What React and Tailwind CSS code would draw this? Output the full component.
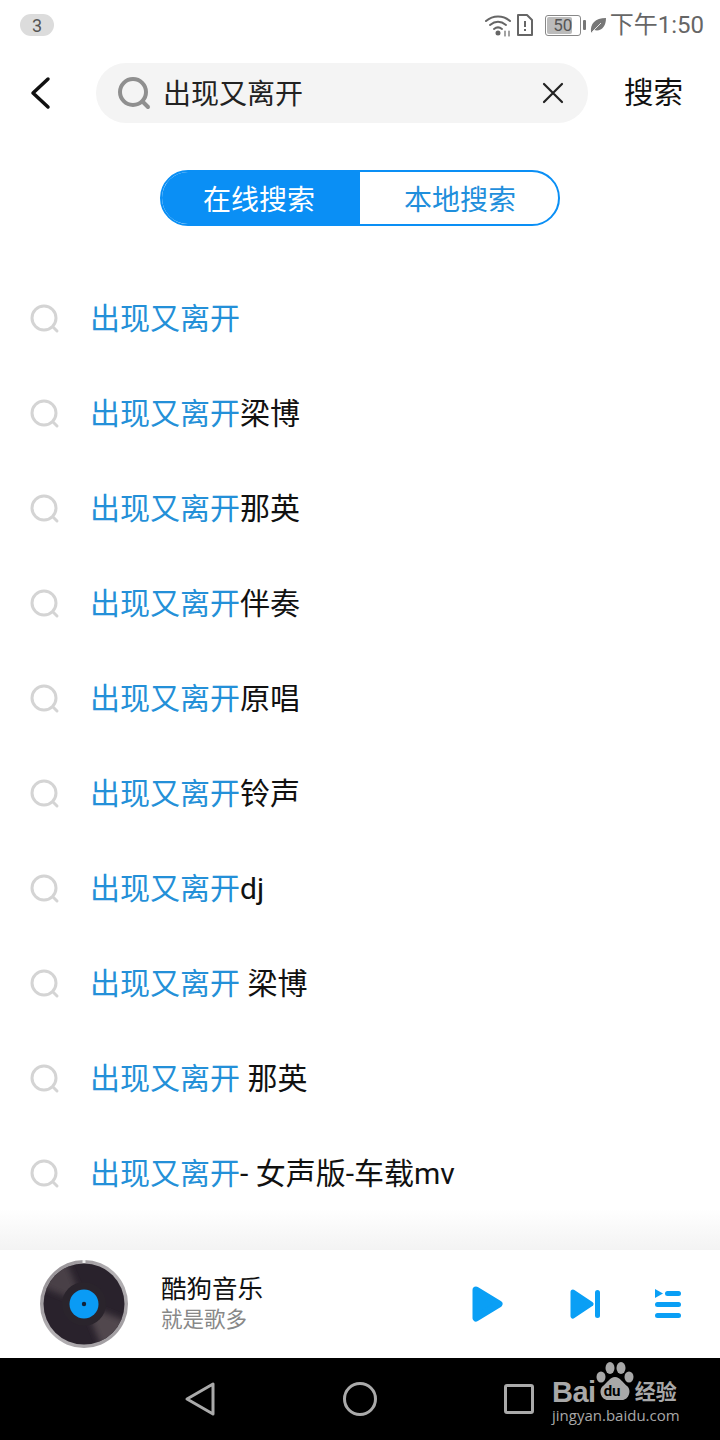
import React from 'react';

const FONT = '"Roboto", "Noto Sans CJK SC", sans-serif';

const rows = [
  ['出现又离开', ''],
  ['出现又离开', '梁博'],
  ['出现又离开', '那英'],
  ['出现又离开', '伴奏'],
  ['出现又离开', '原唱'],
  ['出现又离开', '铃声'],
  ['出现又离开', 'dj'],
  ['出现又离开', ' 梁博'],
  ['出现又离开', ' 那英'],
  ['出现又离开', '- 女声版-车载mv'],
];

function StatusBar() {
  return (
    <div className="h-[50px] flex items-center justify-between pl-5 pr-4 shrink-0">
      <div className="w-[34px] h-[22px] rounded-full bg-[#dcdcdc] flex items-center justify-center text-[18px] text-[#555]">3</div>
      <div className="flex items-center text-[#666]">
        <svg width="28" height="24" viewBox="0 0 28 24" fill="none" stroke="#666" strokeWidth="2" strokeLinecap="round">
          <path d="M2 8c7-6 17-6 24 0" />
          <path d="M6 12c5-4 11-4 16 0" />
          <path d="M10 16c2.500-2 5.500-2 8 0" />
          <circle cx="14" cy="20" r="1.500" fill="#666" />
          <path d="M21 18v5M25 18v5" strokeWidth="1.200" />
        </svg>
        <svg className="ml-[4px]" width="18" height="24" viewBox="0 0 18 24" fill="none" stroke="#666" strokeWidth="2" strokeLinejoin="round">
          <path d="M2 2h9l5 5v15H2z" />
          <path d="M9 8v6M9 16v2" />
        </svg>
        <div className="ml-[11px] w-[36px] h-[21px] rounded-[3px] border border-[#888] p-[1px] relative">
          <div className="w-[25px] h-full bg-[#bbb] rounded-[2px]" />
          <span className="absolute inset-0 flex items-center justify-center text-[17px] leading-none text-[#555]">50</span>
        </div>
        <div className="ml-[2px] w-[3px] h-[10px] bg-[#777] rounded-[1px]" />
        <svg className="ml-[3px]" width="18" height="18" viewBox="0 0 18 18">
          <path d="M2 16C1 8 6 2 17 2c0 9-5 14-12 12L3 16.500z" fill="#777" />
          <path d="M3 16L12 7" stroke="#fff" strokeWidth="0.800" />
        </svg>
        <span className="ml-[3px] text-[24px] leading-none text-[#666]">下午1:50</span>
      </div>
    </div>
  );
}

function SearchBar() {
  return (
    <div className="h-[86px] flex items-center shrink-0">
      <button className="w-[96px] flex items-center pl-[28px]">
        <svg width="24" height="34" viewBox="0 0 24 34" fill="none" stroke="#111" strokeWidth="3.500" strokeLinecap="round" strokeLinejoin="round">
          <path d="M20 3L5 17l15 14" />
        </svg>
      </button>
      <div className="w-[492px] h-[60px] rounded-full bg-[#f4f4f4] flex items-center pl-[21px] pr-[24px]">
        <svg width="34" height="34" viewBox="0 0 34 34" fill="none" stroke="#8f8f8f" strokeWidth="4" strokeLinecap="round">
          <circle cx="16" cy="16" r="13" />
          <path d="M26 26l5 5" />
        </svg>
        <span className="ml-[12px] pt-[3px] flex-1 text-[28px] text-[#222]">出现又离开</span>
        <svg width="22" height="22" viewBox="0 0 22 22" stroke="#222" strokeWidth="2.200" strokeLinecap="round">
          <path d="M2 2l18 18M20 2L2 20" />
        </svg>
      </div>
      <span className="ml-[36px] pt-[1px] text-[29.500px] text-[#111]">搜索</span>
    </div>
  );
}

function SearchTabs() {
  return (
    <div className="flex justify-center shrink-0 mt-[34px]">
      <div className="w-[400px] h-[56px] rounded-full border-2 border-[#0a8ff5] flex overflow-hidden">
        <div className="w-[198px] bg-[#0a8ff5] text-white text-[28px] pt-[5px] pr-[4px] flex items-center justify-center">在线搜索</div>
        <div className="flex-1 text-[#1f8fdc] text-[28px] pt-[5px] pl-[2px] flex items-center justify-center">本地搜索</div>
      </div>
    </div>
  );
}

function Row({ hit, rest }) {
  return (
    <div className="h-[95px] flex items-center pl-[30px]">
      <svg width="30" height="30" viewBox="0 0 30 30" fill="none" stroke="#d4d4d4" strokeWidth="3" strokeLinecap="round">
        <circle cx="14" cy="14" r="12" />
        <path d="M23 23l4 4" />
      </svg>
      <span className="ml-[30px] text-[30px] whitespace-pre text-[#111]">
        <span className="text-[#2490d8]">{hit}</span>{rest}
      </span>
    </div>
  );
}

function Disc() {
  return (
    <svg width="88" height="88" viewBox="0 0 88 88">
      <defs>
        <linearGradient id="rim" x1="0" y1="0" x2="1" y2="1">
          <stop offset="0" stopColor="#8f8a8f" />
          <stop offset="0.5" stopColor="#b5b2b5" />
          <stop offset="1" stopColor="#9a969a" />
        </linearGradient>
        <clipPath id="vinyl">
          <circle cx="44" cy="44" r="40.500" />
        </clipPath>
        <filter id="soft">
          <feGaussianBlur stdDeviation="3" />
        </filter>
      </defs>
      <circle cx="44" cy="44" r="44" fill="url(#rim)" />
      <circle cx="44" cy="44" r="40.500" fill="#29222c" />
      <g clipPath="url(#vinyl)">
        <path d="M44 44L88 62L64 92z" fill="#51474e" filter="url(#soft)" />
        <path d="M44 44L0 26L24 -4z" fill="#483f46" filter="url(#soft)" />
      </g>
      <circle cx="44" cy="44" r="22" fill="#2a242c" />
      <circle cx="44" cy="44" r="14.500" fill="#0a9bf5" />
      <circle cx="44" cy="44" r="2.200" fill="#12233a" />
      <rect x="42.500" y="0" width="3" height="3" fill="#eee" />
    </svg>
  );
}

function PlayerBar() {
  return (
    <div className="h-[108px] bg-white flex items-center pl-[40px] shrink-0">
      <Disc />
      <div className="ml-[33px] flex-1">
        <div className="text-[25.500px] leading-[32px] text-[#111]">酷狗音乐</div>
        <div className="text-[21.500px] leading-[30px] text-[#888]">就是歌多</div>
      </div>
      <svg width="32" height="38" viewBox="0 0 32 38" fill="#0a9ff5" stroke="#0a9ff5" strokeWidth="7" strokeLinejoin="round">
        <path d="M4 5l23 14L4 33z" />
      </svg>
      <svg className="ml-[66px]" width="30" height="30" viewBox="0 0 30 30" fill="#0a9ff5">
        <path d="M3 3l18 12L3 27z" stroke="#0a9ff5" strokeWidth="5" strokeLinejoin="round" />
        <rect x="25" y="1" width="5" height="28" rx="2.500" />
      </svg>
      <svg className="ml-[54px] mr-[38px]" width="28" height="30" viewBox="0 0 28 30" fill="#0a9ff5">
        <path d="M1 0l8 4.500L1 9z" />
        <rect x="11" y="2" width="16" height="5" rx="2.500" />
        <rect x="1" y="13" width="26" height="5" rx="2.500" />
        <rect x="1" y="24" width="26" height="5" rx="2.500" />
      </svg>
    </div>
  );
}

function NavBar() {
  return (
    <div className="h-[82px] bg-black flex items-center relative shrink-0">
      <svg className="ml-[184px]" width="32" height="36" viewBox="0 0 32 36" fill="none" stroke="#aaa" strokeWidth="3" strokeLinejoin="round">
        <path d="M29 3v30L3 18z" />
      </svg>
      <svg className="ml-[126px]" width="36" height="36" viewBox="0 0 36 36" fill="none" stroke="#aaa" strokeWidth="3">
        <circle cx="18" cy="18" r="15.500" />
      </svg>
      <div className="ml-[126px] w-[30px] h-[30px] rounded-[3px] border-[3px] border-[#aaa]" />
      {/* watermark over the nav bar */}
      <div className="absolute left-[552px] top-[4px] w-[160px] text-[#a8a8a8]">
        <div className="flex items-end h-[42px]">
          <span className="font-bold text-[29px] leading-[24px] tracking-[-0.500px]" style={{ fontFamily: '"Liberation Sans", sans-serif' }}>Bai</span>
          <div className="relative w-[38px] h-[42px]">
            <svg width="38" height="42" viewBox="0 0 38 42" fill="#a8a8a8">
              <ellipse cx="5" cy="15" rx="4.500" ry="5.500" />
              <ellipse cx="14" cy="6" rx="4.500" ry="6" />
              <ellipse cx="25" cy="6" rx="4.500" ry="6" />
              <ellipse cx="33" cy="15" rx="4.500" ry="5.500" />
              <path d="M19 15c5 0 8 6 12 9 5 4 2 14-5 14H12C5 38 2 28 7 24c4-3 7-9 12-9z" />
            </svg>
            <span className="absolute left-[8px] top-[22px] text-[15px] leading-none font-bold text-black">du</span>
          </div>
          <span className="ml-[1px] text-[21px] leading-[24px] font-bold">经验</span>
        </div>
        <div className="mt-[1px] text-[15px] leading-[20px] whitespace-nowrap" style={{ fontFamily: '"Open Sans", sans-serif' }}>jingyan.baidu.com</div>
      </div>
    </div>
  );
}

export default function App() {
  return (
    <div className="w-[720px] h-[1440px] bg-white flex flex-col overflow-hidden" style={{ fontFamily: FONT }}>
      <StatusBar />
      <SearchBar />
      <SearchTabs />
      <div className="flex-1 pt-[45px] bg-gradient-to-b from-white from-[96%] to-[#f3f3f3]">
        {rows.map(([hit, rest], i) => (
          <Row key={i} hit={hit} rest={rest} />
        ))}
      </div>
      <PlayerBar />
      <NavBar />
    </div>
  );
}
